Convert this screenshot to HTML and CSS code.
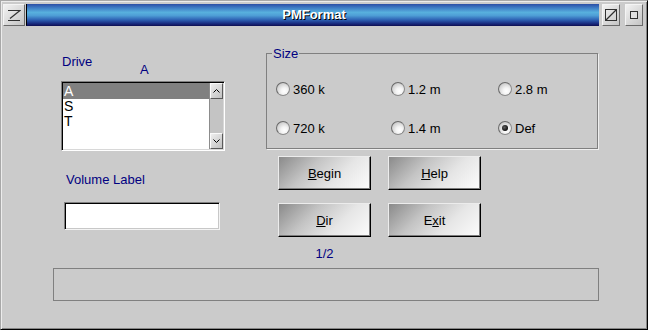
FILE: index.html
```html
<!DOCTYPE html>
<html lang="en">
<head>
    <meta charset="UTF-8">
    <title>PMFormat</title>
    <link rel="stylesheet" href="styles.css">
</head>
<body>
    <div class="window">
        <div class="titlebar">
            <span class="tb-btn menu">
                <svg width="14" height="12" viewBox="0 0 14 12"><path d="M1 1.5H13L3 9.5M1 11.5H13" fill="none" stroke="#303030" stroke-width="1.2"/></svg>
            </span>
            <div class="title">PMFormat</div>
            <span class="tb-btn max">
                <svg width="14" height="14" viewBox="0 0 14 14"><rect x="1.5" y="1.5" width="11" height="11" fill="none" stroke="#303030"/><path d="M2 12L12 2" stroke="#303030" stroke-width="1.2"/></svg>
            </span>
            <span class="tb-btn min">
                <svg width="10" height="10" viewBox="0 0 10 10"><rect x="1.5" y="1.5" width="7" height="7" fill="#e0e0e0" stroke="#303030"/></svg>
            </span>
        </div>

        <div class="content">
            <div class="top">
                <div class="left">
                    <div class="drive-row">
                        <span class="label drive">Drive</span>
                        <span class="label current">A</span>
                    </div>

                    <!-- lista de drives -->
                    <div class="listbox">
                        <ul class="items">
                            <li class="sel">A</li>
                            <li>S</li>
                            <li>T</li>
                        </ul>
                        <div class="scrollbar">
                            <span class="arrow">
                                <svg width="7" height="4" viewBox="0 0 7 4"><path d="M0.5 3.5L3.5 0.5L6.5 3.5" fill="none" stroke="#000"/></svg>
                            </span>
                            <span class="track"></span>
                            <span class="arrow">
                                <svg width="7" height="4" viewBox="0 0 7 4"><path d="M0.5 0.5L3.5 3.5L6.5 0.5" fill="none" stroke="#000"/></svg>
                            </span>
                        </div>
                    </div>

                    <div class="label vol">Volume Label</div>
                    <input type="text" class="vol-input">
                </div>

                <div class="right">
                    <fieldset class="size">
                        <legend>Size</legend>
                        <div class="radios">
                            <label class="radio"><span class="dot"></span>360 k</label>
                            <label class="radio"><span class="dot"></span>1.2 m</label>
                            <label class="radio"><span class="dot"></span>2.8 m</label>
                            <label class="radio"><span class="dot"></span>720 k</label>
                            <label class="radio"><span class="dot"></span>1.4 m</label>
                            <label class="radio"><span class="dot on"></span>Def</label>
                        </div>
                    </fieldset>

                    <div class="buttons">
                        <button><u>B</u>egin</button>
                        <button><u>H</u>elp</button>
                        <button><u>D</u>ir</button>
                        <button>E<u>x</u>it</button>
                    </div>
                    <div class="label page">1/2</div>
                </div>
            </div>

            <div class="status"></div>
        </div>
    </div>
</body>
</html>
```

FILE: styles.css
```css
* {
    box-sizing: border-box;
}

body {
    margin: 0;
    font-family: "Liberation Sans", Arial, sans-serif;
    font-size: 13px;
    line-height: 15px;
}

.window {
    width: 648px;
    height: 330px;
    background: #cbcbcb;
    border: 1px solid;
    border-color: #a8a8a8 #000 #000 #a8a8a8;
    box-shadow: inset 1px 1px 0 #ececec, inset -1px -1px 0 #858585;
}

/* barra de titulo */
.titlebar {
    display: flex;
    height: 22px;
    margin: 3px 4px 1px 2px;
}

.tb-btn {
    display: flex;
    align-items: center;
    justify-content: center;
    width: 18px;
    border: 1px solid;
    border-color: #f4f4f4 #6a6a6a #6a6a6a #f4f4f4;
    background: linear-gradient(135deg, #f2f2f2, #c4c4c4);
}

.tb-btn.menu {
    width: 22px;
}

.tb-btn.max {
    margin-left: 3px;
}

.tb-btn.min {
    margin-left: 5px;
}

.title {
    flex: 1;
    margin-left: 1px;
    border-left: 1px solid #000;
    border-bottom: 1px solid #10145a;
    background: linear-gradient(to bottom, #2c4ea6 0%, #3e7cc4 18%, #58b0de 40%, #4e9ed6 55%, #2e62b4 75%, #1a2e82 92%, #121a66 100%);
    color: #fff;
    font-weight: bold;
    font-size: 13px;
    line-height: 21px;
    text-align: center;
    text-shadow: 1px 1px 0 #000;
    padding-left: 2px;
}

/* conteudo */
.content {
    padding-left: 52px;
}

.top {
    display: flex;
    padding-left: 8px;
    height: 241px;
}

.label {
    color: #000080;
}

.left {
    width: 164px;
    padding-top: 27px;
}

.drive-row {
    display: flex;
    height: 23px;
    margin-bottom: 4px;
}

.drive {
    width: 79px;
    padding-left: 1px;
}

.current {
    margin-top: 8px;
}

.listbox {
    display: flex;
    height: 70px;
    border: 1px solid;
    border-color: #808080 #fff #fff #808080;
    box-shadow: inset 1px 1px 0 #000, inset -1px -1px 0 #d8d8d8;
    padding: 1px;
    background: #fff;
}

.items {
    flex: 1;
    list-style: none;
    margin: 0;
    padding: 0;
    font-size: 14px;
    line-height: 15px;
}

.items li {
    height: 15px;
    padding-left: 1px;
}

.items li:first-child {
    height: 16px;
    padding-top: 1px;
}

.items li.sel {
    background: #808080;
    color: #fff;
}

.scrollbar {
    display: flex;
    flex-direction: column;
    width: 14px;
    background: #c4c4c4;
    border-left: 1px solid #8c8c8c;
}

.scrollbar .track {
    flex: 1;
}

.scrollbar .arrow {
    display: flex;
    align-items: center;
    justify-content: center;
    height: 16px;
    border: 1px solid;
    border-color: #fafafa #5a5a5a #5a5a5a #fafafa;
    background: linear-gradient(135deg, #eeeeee, #c0c0c0);
}

.vol {
    margin-top: 21px;
    padding-left: 5px;
}

.vol-input {
    display: block;
    width: 156px;
    height: 28px;
    margin: 15px 0 0 3px;
    border: 1px solid;
    border-color: #808080 #f4f4f4 #f4f4f4 #808080;
    box-shadow: inset 1px 1px 0 #000, inset -1px -1px 0 #c8c8c8;
    background: #fff;
    padding: 0 4px;
    font: inherit;
}

.right {
    width: 333px;
    margin-left: 41px;
    padding-top: 19px;
}

.size {
    margin: 0;
    padding: 0;
    width: 332px;
    height: 103px;
    border: 1px solid #808080;
    box-shadow: 1px 1px 0 #f0f0f0;
}

.size legend {
    color: #000080;
    padding: 0 1px;
    margin-left: 5px;
    line-height: 15px;
}

.radios {
    display: grid;
    grid-template-columns: 115px 107px auto;
    grid-auto-rows: 14px;
    row-gap: 25px;
    padding: 21px 0 0 9px;
}

.radio {
    display: flex;
    align-items: center;
    gap: 3px;
    color: #000;
}

.dot {
    display: flex;
    align-items: center;
    justify-content: center;
    width: 14px;
    height: 14px;
    border-radius: 50%;
    border: 1px solid #8a8a8a;
    border-top-color: #6a6a6a;
    border-left-color: #6a6a6a;
    background: radial-gradient(circle at 62% 68%, #ffffff 0%, #f4f4f4 30%, #d0d0d0 70%, #a4a4a4 100%);
}

.dot.on::after {
    content: "";
    width: 6px;
    height: 6px;
    border-radius: 50%;
    background: radial-gradient(circle at 40% 40%, #606060, #000 80%);
}

/* botoes */
.buttons {
    display: grid;
    grid-template-columns: 93px 93px;
    grid-auto-rows: 34px;
    column-gap: 17px;
    row-gap: 13px;
    margin: 7px 0 0 12px;
}

.buttons button {
    font: inherit;
    color: #000;
    padding: 0;
    border: 1px solid;
    border-color: #ececec #000 #000 #ececec;
    box-shadow: inset -1px -1px 0 #7c7c7c;
    background: linear-gradient(135deg, #8a8a8a 0%, #c4c4c4 35%, #e6e6e6 65%, #fcfcfc 100%);
}

.page {
    width: 93px;
    margin: 9px 0 0 12px;
    text-align: center;
}

.status {
    width: 546px;
    height: 33px;
    border: 1px solid #808080;
}
```
